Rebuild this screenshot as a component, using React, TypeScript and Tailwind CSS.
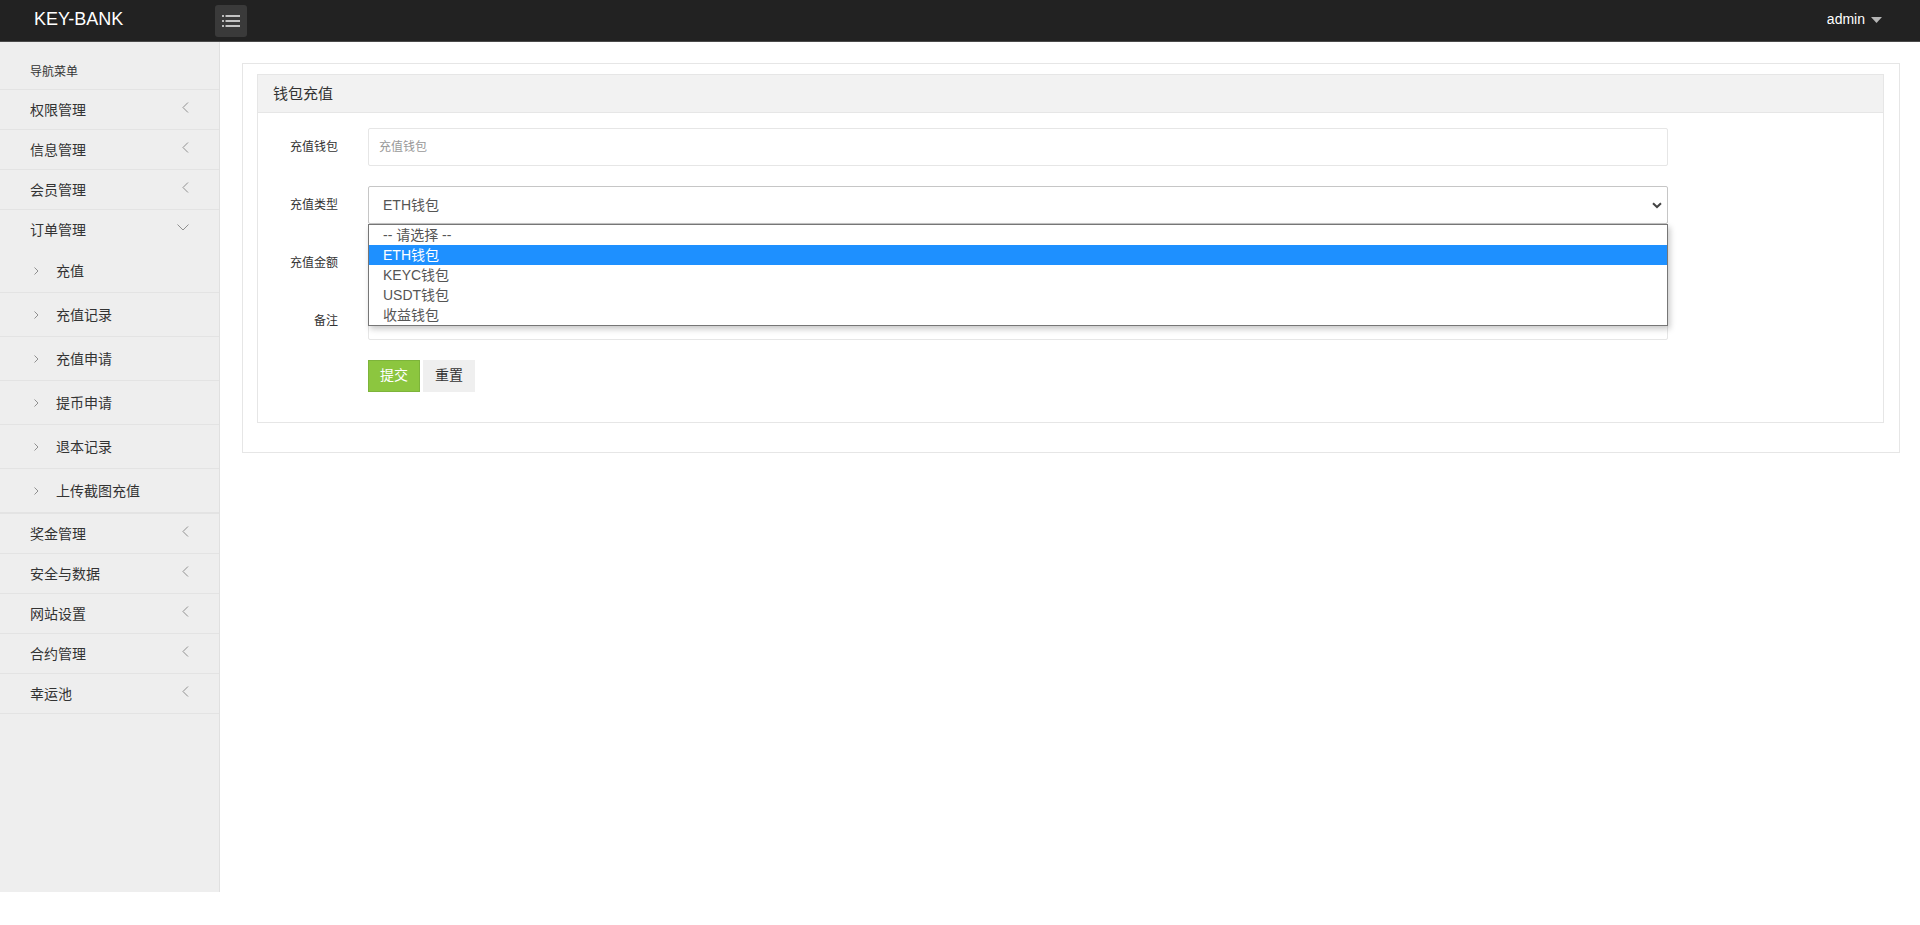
import React from 'react';

const ChevLeft = () => (
  <svg width="7" height="11" viewBox="0 0 7 11" className="mb-[5px]">
    <polyline points="6,0.5 1,5.5 6,10.5" fill="none" stroke="#8f8f8f" strokeWidth="1" />
  </svg>
);

const ChevDown = () => (
  <svg width="12" height="7" viewBox="0 0 12 7" className="mb-[5px]">
    <polyline points="0.5,0.5 6,6 11.5,0.5" fill="none" stroke="#8f8f8f" strokeWidth="1" />
  </svg>
);

const ChevRightSmall = () => (
  <svg width="5" height="8" viewBox="0 0 5 8">
    <polyline points="0.5,0.5 4,4 0.5,7.5" fill="none" stroke="#8f8f8f" strokeWidth="1" />
  </svg>
);

const MainItem = ({ label, open = false }: { label: string; open?: boolean }) => (
  <div
    className={`flex items-center justify-between pl-[30px] pr-[30px] text-[14px] leading-[20px] text-[#333] ${
      open ? 'h-[39px]' : 'h-[40px] border-b border-[#e3e3e3]'
    }`}
  >
    <span>{label}</span>
    {open ? <ChevDown /> : <ChevLeft />}
  </div>
);

const SubItem = ({ label }: { label: string }) => (
  <div className="h-[44px] flex items-center pl-[34px] border-b border-[#e3e3e3] text-[14px] leading-[20px] text-[#333]">
    <ChevRightSmall />
    <span className="ml-[17px]">{label}</span>
  </div>
);

const FormRow = ({ label, children, last = false }: { label: string; children: React.ReactNode; last?: boolean }) => (
  <div className={`flex items-center h-[38px] ${last ? '' : 'mb-[20px]'}`}>
    <div className="w-[80px] text-right text-[12px] leading-[16px] text-[#333]">{label}</div>
    <div className="ml-[30px] w-[1300px] h-[38px] relative">{children}</div>
  </div>
);

export default function App() {
  const options = ['-- 请选择 --', 'ETH钱包', 'KEYC钱包', 'USDT钱包', '收益钱包'];
  return (
    <div className="w-[1920px] h-[925px] bg-white overflow-hidden font-['Liberation_Sans','Noto_Sans_CJK_SC',sans-serif]">
      {/* Header */}
      <header className="h-[42px] bg-[#222] border-b border-[#4a4a4a] flex items-center">
        <div className="w-[215px] pl-[34px] mb-[3px] text-[18px] leading-[22px] text-white">KEY-BANK</div>
        <button className="w-[32px] h-[32px] bg-[#3a3a3a] rounded-[3px] flex items-center justify-center">
          <svg width="32" height="32" viewBox="0 0 32 32">
            <g stroke="#e6e6e6" strokeWidth="1.6">
              <line x1="7" y1="11" x2="9" y2="11" />
              <line x1="10.5" y1="11" x2="25" y2="11" />
              <line x1="7" y1="16" x2="9" y2="16" />
              <line x1="10.5" y1="16" x2="25" y2="16" />
              <line x1="7" y1="21" x2="9" y2="21" />
              <line x1="10.5" y1="21" x2="25" y2="21" />
            </g>
          </svg>
        </button>
        <div className="ml-auto pr-[38px] mb-[4px] flex items-center text-[14px] leading-[20px] text-white">
          <span>admin</span>
          <svg width="11" height="6" viewBox="0 0 11 6" className="ml-[6px] mt-[2px]">
            <polygon points="0,0 11,0 5.5,6" fill="#b5b5b5" />
          </svg>
        </div>
      </header>

      <div className="flex">
        {/* Sidebar */}
        <aside className="w-[220px] h-[850px] bg-[#eee] border-r border-[#e0e0e0] shrink-0">
          <div className="h-[48px] border-b border-[#e3e3e3] pl-[30px] pt-[22px] text-[12px] leading-[16px] text-[#333]">
            导航菜单
          </div>
          <MainItem label="权限管理" />
          <MainItem label="信息管理" />
          <MainItem label="会员管理" />
          <MainItem label="订单管理" open />
          <div className="border-b border-[#e3e3e3]">
            <SubItem label="充值" />
            <SubItem label="充值记录" />
            <SubItem label="充值申请" />
            <SubItem label="提币申请" />
            <SubItem label="退本记录" />
            <SubItem label="上传截图充值" />
          </div>
          <MainItem label="奖金管理" />
          <MainItem label="安全与数据" />
          <MainItem label="网站设置" />
          <MainItem label="合约管理" />
          <MainItem label="幸运池" />
        </aside>

        {/* Main */}
        <main className="flex-1 pt-[21px] pl-[22px] pr-[20px]">
          <div className="border border-[#e6e6e6] pt-[10px] pl-[14px] pr-[15px] pb-[29px]">
            <div className="border border-[#e6e6e6]">
              <div className="h-[38px] bg-[#f2f2f2] border-b border-[#e6e6e6] flex items-center pl-[15px] text-[15px] leading-[20px] text-[#333]">
                钱包充值
              </div>
              <div className="pt-[15px] pb-[30px]">
                <FormRow label="充值钱包">
                  <div className="w-full h-full border border-[#e6e6e6] rounded-[2px] flex items-center pl-[10px] text-[12px] leading-[16px] text-[#999]">
                    充值钱包
                  </div>
                </FormRow>
                <FormRow label="充值类型">
                  <div className="w-full h-full border border-[#c6c6c6] rounded-[2px] flex items-center justify-between pl-[14px] pr-[5px] text-[14px] leading-[18px] text-[#555]">
                    <span>ETH钱包</span>
                    <svg width="10" height="7" viewBox="0 0 10 7">
                      <polyline points="1,1.2 5,5 9,1.2" fill="none" stroke="#444" strokeWidth="2" />
                    </svg>
                  </div>
                  <div className="absolute left-0 top-full w-full z-10 bg-white border border-[#767676] shadow-[2px_3px_6px_rgba(0,0,0,0.22)]">
                    {options.map((o) => (
                      <div
                        key={o}
                        className={`h-[20px] pl-[14px] text-[14px] leading-[20px] ${
                          o === 'ETH钱包' ? 'bg-[#1e90ff] text-white' : 'text-[#555]'
                        }`}
                      >
                        {o}
                      </div>
                    ))}
                  </div>
                </FormRow>
                <FormRow label="充值金额">
                  <div className="w-full h-full border border-[#e6e6e6] rounded-[2px]" />
                </FormRow>
                <FormRow label="备注">
                  <div className="w-full h-full border border-[#e6e6e6] rounded-[2px]" />
                </FormRow>
                <div className="flex pl-[110px] gap-[3px]">
                  <button className="h-[32px] px-[11px] pb-[3px] border border-[#7db43a] bg-[#8cc63f] text-white text-[14px] leading-[20px]">
                    提交
                  </button>
                  <button className="h-[32px] px-[11px] pb-[3px] border border-[#efefef] bg-[#efefef] text-[#333] text-[14px] leading-[20px]">
                    重置
                  </button>
                </div>
              </div>
            </div>
          </div>
        </main>
      </div>
    </div>
  );
}
